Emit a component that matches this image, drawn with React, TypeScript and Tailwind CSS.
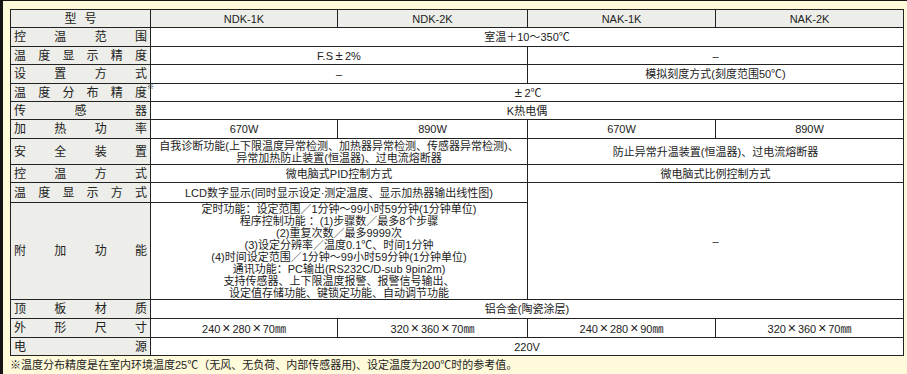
import React from "react";

const Label = ({ chars, sup }: { chars: string[]; sup?: boolean }) => (
  <div className="flex justify-between px-[3px] text-[12px] leading-[14px]">
    {chars.map((c, i) => (
      <span key={i} className="relative">
        {c}
        {sup && i === chars.length - 1 ? (
          <span className="absolute -right-[7px] -top-[3px] text-[7px] leading-none">※</span>
        ) : null}
      </span>
    ))}
  </div>
);

const X = () => <span className="inline-block w-[12px] text-center text-[14px] leading-[12px]">×</span>;
const PM = () => <span className="inline-block w-[12px] text-center text-[13px] leading-[12px]">±</span>;

const Dim = ({ a, b, c }: { a: string; b: string; c: string }) => (
  <>
    {a}
    <X />
    {b}
    <X />
    {c}㎜
  </>
);

const td = "border border-[#222] p-0 text-center align-middle";
const lab = "border border-[#222] p-0 bg-[#edeee9] align-middle";

export default function App() {
  return (
    <div
      className="w-[907px] h-[374px] bg-[#fffad9] border-l-[3px] border-t border-[#151515] pl-[7px] pt-[8px] text-[#222]"
      style={{ fontFamily: "'Liberation Sans', 'Noto Sans CJK SC', sans-serif" }}
    >
      <table className="border-collapse table-fixed w-[893px] text-[11px] leading-[12px]">
        <colgroup>
          <col className="w-[140px]" />
          <col className="w-[187px]" />
          <col className="w-[190px]" />
          <col className="w-[188px]" />
          <col className="w-[188px]" />
        </colgroup>
        <tbody>
          <tr className="h-[18px] bg-[#edeee9]">
            <td className={td + " text-[12px] tracking-[8px] pl-[8px]"}>型号</td>
            <td className={td}>NDK-1K</td>
            <td className={td}>NDK-2K</td>
            <td className={td}>NAK-1K</td>
            <td className={td}>NAK-2K</td>
          </tr>
          <tr className="h-[19px] bg-white">
            <td className={lab}><Label chars={["控", "温", "范", "围"]} /></td>
            <td className={td} colSpan={4}>室温＋10～350℃</td>
          </tr>
          <tr className="h-[18px] bg-white">
            <td className={lab}><Label chars={["温", "度", "显", "示", "精", "度"]} /></td>
            <td className={td} colSpan={2}>F.S<PM />2%</td>
            <td className={td} colSpan={2}>–</td>
          </tr>
          <tr className="h-[19px] bg-white">
            <td className={lab}><Label chars={["设", "置", "方", "式"]} /></td>
            <td className={td} colSpan={2}>–</td>
            <td className={td} colSpan={2}>模拟刻度方式(刻度范围50℃)</td>
          </tr>
          <tr className="h-[18px] bg-white">
            <td className={lab}><Label chars={["温", "度", "分", "布", "精", "度"]} sup /></td>
            <td className={td} colSpan={4}><PM />2℃</td>
          </tr>
          <tr className="h-[18px] bg-white">
            <td className={lab}><Label chars={["传", "感", "器"]} /></td>
            <td className={td} colSpan={4}>K热电偶</td>
          </tr>
          <tr className="h-[19px] bg-white">
            <td className={lab}><Label chars={["加", "热", "功", "率"]} /></td>
            <td className={td}>670W</td>
            <td className={td}>890W</td>
            <td className={td}>670W</td>
            <td className={td}>890W</td>
          </tr>
          <tr className="h-[26px] bg-white">
            <td className={lab}><Label chars={["安", "全", "装", "置"]} /></td>
            <td className={td} colSpan={2}>
              <div>自我诊断功能(上下限温度异常检测、加热器异常检测、传感器异常检测)、</div>
              <div>异常加热防止装置(恒温器)、过电流熔断器</div>
            </td>
            <td className={td} colSpan={2}>防止异常升温装置(恒温器)、过电流熔断器</td>
          </tr>
          <tr className="h-[18px] bg-white">
            <td className={lab}><Label chars={["控", "温", "方", "式"]} /></td>
            <td className={td} colSpan={2}>微电脑式PID控制方式</td>
            <td className={td} colSpan={2}>微电脑式比例控制方式</td>
          </tr>
          <tr className="h-[20px] bg-white">
            <td className={lab}><Label chars={["温", "度", "显", "示", "方", "式"]} /></td>
            <td className={td} colSpan={2}>LCD数字显示(同时显示设定·测定温度、显示加热器输出线性图)</td>
            <td className={td} colSpan={2} rowSpan={2}>–</td>
          </tr>
          <tr className="h-[97px] bg-white">
            <td className={lab}><Label chars={["附", "加", "功", "能"]} /></td>
            <td className={td} colSpan={2}>
              <div>定时功能：设定范围／1分钟～99小时59分钟(1分钟单位)</div>
              <div>程序控制功能 ：(1)步骤数／最多8个步骤</div>
              <div>(2)重复次数／最多9999次</div>
              <div>(3)设定分辨率／温度0.1℃、时间1分钟</div>
              <div>(4)时间设定范围／1分钟～99小时59分钟(1分钟单位)</div>
              <div>通讯功能：PC输出(RS232C/D-sub 9pin2m)</div>
              <div>支持传感器、上下限温度报警、报警信号输出、</div>
              <div>设定值存储功能、键锁定功能、自动调节功能</div>
            </td>
          </tr>
          <tr className="h-[19px] bg-white">
            <td className={lab}><Label chars={["顶", "板", "材", "质"]} /></td>
            <td className={td} colSpan={4}>铝合金(陶瓷涂层)</td>
          </tr>
          <tr className="h-[19px] bg-white">
            <td className={lab}><Label chars={["外", "形", "尺", "寸"]} /></td>
            <td className={td}><Dim a="240" b="280" c="70" /></td>
            <td className={td}><Dim a="320" b="360" c="70" /></td>
            <td className={td}><Dim a="240" b="280" c="90" /></td>
            <td className={td}><Dim a="320" b="360" c="70" /></td>
          </tr>
          <tr className="h-[18px] bg-white">
            <td className={lab}><Label chars={["电", "源"]} /></td>
            <td className={td} colSpan={4}>220V</td>
          </tr>
        </tbody>
      </table>
      <div className="text-[11px] leading-[16px] pt-[1px]">
        ※温度分布精度是在室内环境温度25℃（无风、无负荷、内部传感器用)、设定温度为200℃时的参考值。
      </div>
    </div>
  );
}
